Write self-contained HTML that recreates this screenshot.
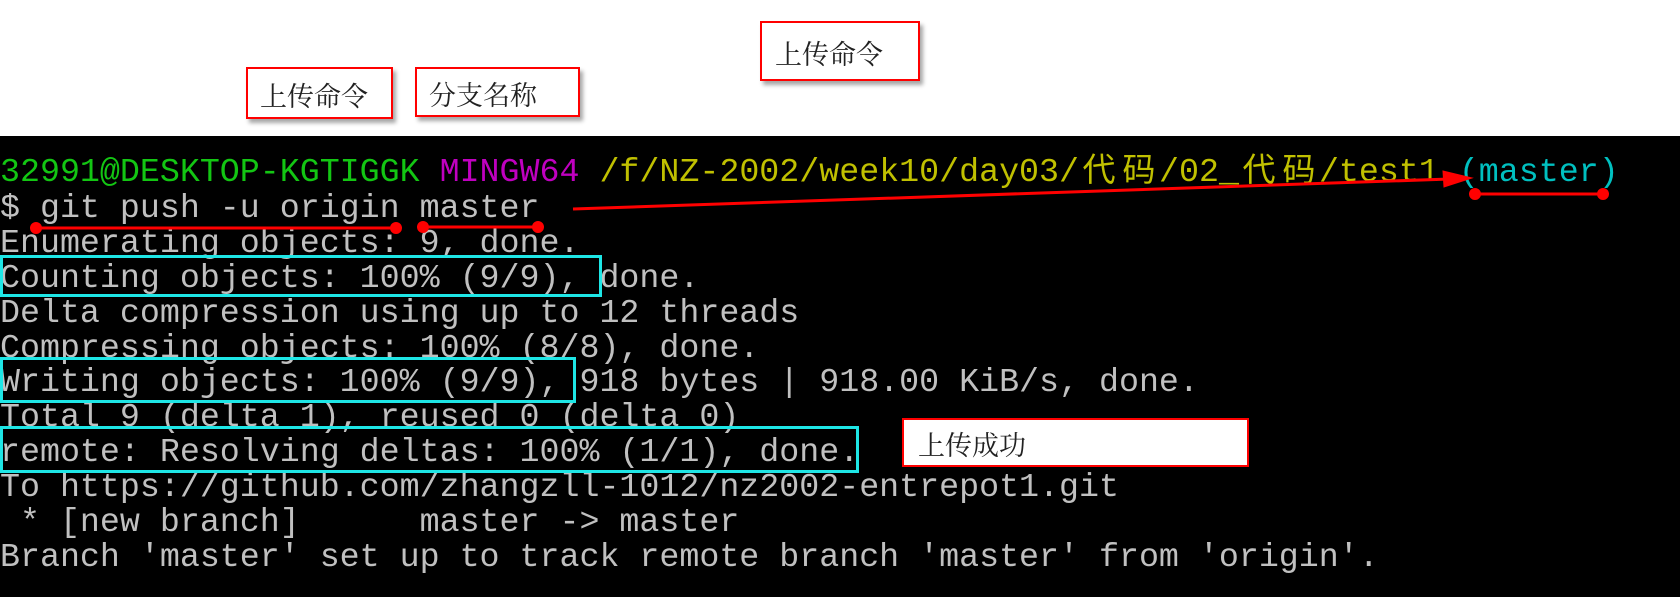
<!DOCTYPE html>
<html><head><meta charset="utf-8"><style>
html,body{margin:0;padding:0}
body{width:1680px;height:597px;position:relative;background:#fff;overflow:hidden}
.term{position:absolute;left:0;top:136px;width:1680px;height:461px;background:#000}
.txt{position:absolute;left:0;top:155px;font-family:"Liberation Mono","Noto Sans CJK SC",monospace;font-size:33.3px;line-height:34.9px;color:#c0c0c0;white-space:pre;letter-spacing:0}
.g{color:#13c613}.m{color:#c000c0}.y{color:#c0c000}.c{color:#00c0c0}
.cj{display:inline-block;width:40px;text-align:center;font-size:33px}
.lab{position:absolute;background:#fff;border:2px solid #f00;box-shadow:3px 4px 4px rgba(0,0,0,.35);font-family:"Noto Serif CJK SC","Liberation Serif",serif;font-size:27px;color:#222;box-sizing:border-box;padding-left:12px;padding-top:2px;display:flex;align-items:center}
.cy{position:absolute;border:3px solid #1ee6e6;box-sizing:border-box}
</style></head><body>
<div class="lab" style="left:760px;top:21px;width:160px;height:60px;padding-left:13px">上传命令</div>
<div class="lab" style="left:246px;top:67px;width:147px;height:52px">上传命令</div>
<div class="lab" style="left:415px;top:67px;width:165px;height:50px">分支名称</div>
<div class="term"></div>
<div class="txt"><span class="g">32991@DESKTOP-KGTIGGK</span> <span class="m">MINGW64</span> <span class="y">/f/NZ-2002/week10/day03/<span class="cj">代</span><span class="cj">码</span>/02_<span class="cj">代</span><span class="cj">码</span>/test1</span> <span class="c">(master)</span>
$ git push -u origin master
Enumerating objects: 9, done.
Counting objects: 100% (9/9), done.
Delta compression using up to 12 threads
Compressing objects: 100% (8/8), done.
Writing objects: 100% (9/9), 918 bytes | 918.00 KiB/s, done.
Total 9 (delta 1), reused 0 (delta 0)
remote: Resolving deltas: 100% (1/1), done.
To https://github.com/zhangzll-1012/nz2002-entrepot1.git
 * [new branch]      master -> master
Branch 'master' set up to track remote branch 'master' from 'origin'.</div>
<div class="cy" style="left:0;top:255px;width:602px;height:42px"></div>
<div class="cy" style="left:0;top:357px;width:576px;height:46px"></div>
<div class="cy" style="left:0;top:426px;width:859px;height:47px"></div>
<div class="lab" style="left:902px;top:418px;width:347px;height:49px;padding-left:14px">上传成功</div>
<svg style="position:absolute;left:0;top:0" width="1680" height="597">
<g stroke="#f00" stroke-width="3" fill="#f00">
<line x1="36" y1="228" x2="396" y2="228"/><circle cx="36" cy="228" r="4.5"/><circle cx="396" cy="228" r="4.5"/>
<line x1="423" y1="227" x2="538" y2="227"/><circle cx="423" cy="227" r="4.5"/><circle cx="538" cy="227" r="4.5"/>
<line x1="1475" y1="194" x2="1603" y2="194"/><circle cx="1475" cy="194" r="4.5"/><circle cx="1603" cy="194" r="4.5"/>
<line x1="573" y1="209" x2="1450" y2="179"/>
<polygon points="1472,178 1443,171 1444,187" stroke-width="1"/>
</g></svg>
</body></html>
